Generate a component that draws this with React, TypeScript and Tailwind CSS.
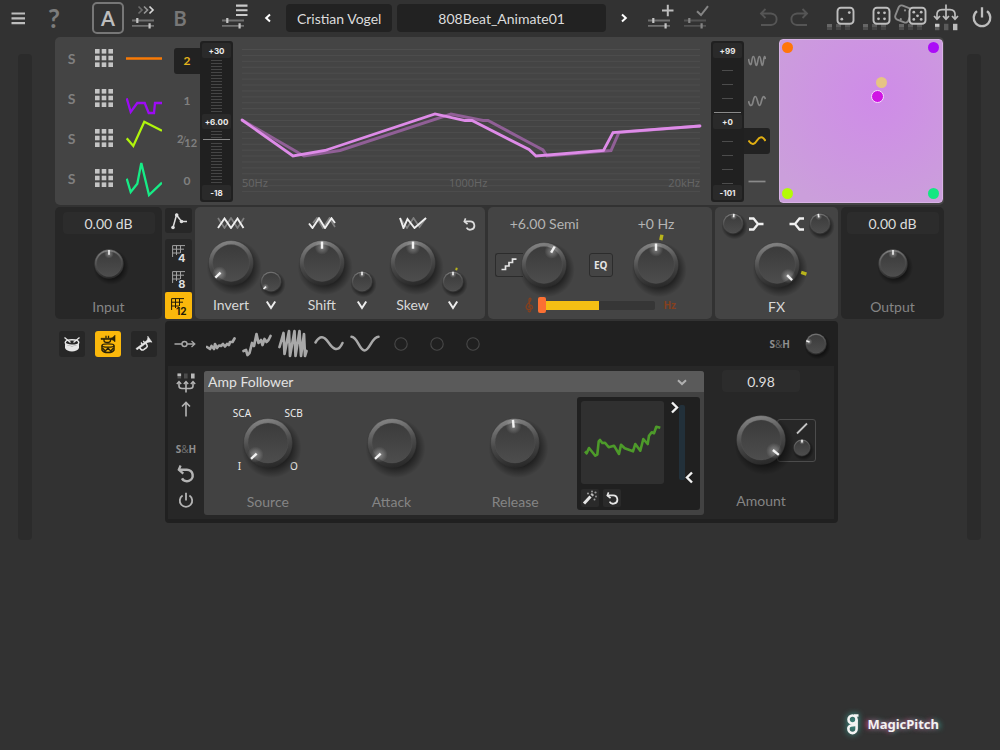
import React, { useId } from 'react';

const rad = (deg: number) => ((deg - 90) * Math.PI) / 180;

type KnobProps = { label: string; r: number; angle: number; mark?: number };

/* Rotary control: the drawn dial sits under a transparent range input. */
function Knob({ label, r, angle, mark }: KnobProps) {
  const id = useId().replace(/[^a-zA-Z0-9]/g, '');
  const c = Math.cos(rad(angle));
  const s = Math.sin(rad(angle));
  const big = r > 18;
  const inner = big ? r * 0.8 : r * 0.84;
  const mc = mark === undefined ? 0 : Math.cos(rad(mark));
  const ms = mark === undefined ? 0 : Math.sin(rad(mark));
  return (
    <span className="relative block shrink-0">
      <svg
        width={r * 2}
        height={r * 2}
        viewBox={`${-r} ${-r} ${r * 2} ${r * 2}`}
        className="block overflow-visible"
        aria-hidden="true"
      >
        <defs>
          <linearGradient id={`${id}o`} x1="0.4" y1="0" x2="0.6" y2="1">
            <stop offset="0" stopColor="#858585" />
            <stop offset="0.5" stopColor="#4a4a4a" />
            <stop offset="1" stopColor="#282828" />
          </linearGradient>
          <linearGradient id={`${id}i`} x1="0" y1="0" x2="0" y2="1">
            <stop offset="0" stopColor="#3b3b3b" />
            <stop offset="1" stopColor="#4d4d4d" />
          </linearGradient>
          <radialGradient id={`${id}s`}>
            <stop offset="0.6" stopColor="#000" stopOpacity="0.55" />
            <stop offset="1" stopColor="#000" stopOpacity="0" />
          </radialGradient>
          <radialGradient id={`${id}g`}>
            <stop offset="0" stopColor="#fff" stopOpacity="0.35" />
            <stop offset="1" stopColor="#fff" stopOpacity="0" />
          </radialGradient>
        </defs>
        <circle cx={r * 0.14} cy={r * 0.2} r={r * 1.2} fill={`url(#${id}s)`} />
        <circle r={r - 0.5} fill={`url(#${id}o)`} stroke="#2e2e2e" strokeOpacity="0.6" strokeWidth="0.6" />
        <circle r={inner} fill={`url(#${id}i)`} stroke="#5a5a5a" strokeOpacity="0.4" strokeWidth="0.7" />
        <circle cx={c * r * 0.68} cy={s * r * 0.68} r={r * 0.32} fill={`url(#${id}g)`} />
        <line
          x1={c * r * 0.62}
          y1={s * r * 0.62}
          x2={c * r * 0.93}
          y2={s * r * 0.93}
          stroke="#f2f2f2"
          strokeWidth={big ? 2.4 : 1.6}
        />
        {mark !== undefined && (
          <line
            x1={mc * r * 1.1}
            y1={ms * r * 1.1}
            x2={mc * r * 1.34}
            y2={ms * r * 1.34}
            stroke="#b8b41c"
            strokeWidth={big ? 3.4 : 2}
          />
        )}
      </svg>
      <input
        type="range"
        aria-label={label}
        min={-150}
        max={150}
        defaultValue={angle}
        className="absolute inset-0 m-0 h-full w-full cursor-pointer opacity-0"
      />
    </span>
  );
}

type IconProps = { w: number; h: number; children: React.ReactNode; className?: string };

function Icon({ w, h, children, className = '' }: IconProps) {
  return (
    <svg
      width={w}
      height={h}
      viewBox={`0 0 ${w} ${h}`}
      fill="none"
      stroke="currentColor"
      strokeWidth="2"
      className={`block shrink-0 ${className}`}
      aria-hidden="true"
    >
      {children}
    </svg>
  );
}

function Slot({ label, className = 'w-9', children }: { label: string; className?: string; children: React.ReactNode }) {
  return (
    <button type="button" aria-label={label} className={`flex shrink-0 items-center justify-center ${className}`}>
      {children}
    </button>
  );
}

const Sliders = ({ dim }: { dim?: boolean }) => (
  <>
    <path d="M6 17.5H28M6 22.8H28" stroke={dim ? '#525252' : '#707070'} strokeWidth="1.8" />
    <path d="M11.3 15V20M23.6 20.3V25.6" stroke={dim ? '#858585' : '#c4c4c4'} strokeWidth="2.2" />
  </>
);

const DieBars = () => (
  <g stroke="none">
    <rect x="7" y="21" width="5" height="6" fill="#4e4e4e" />
    <rect x="7" y="21" width="5" height="3" fill="#666" />
    <rect x="16" y="21" width="5" height="6" fill="#444" />
    <rect x="16" y="21" width="5" height="3" fill="#585858" />
    <rect x="25" y="21" width="5" height="6" fill="#444" />
    <rect x="25" y="21" width="5" height="3" fill="#555" />
  </g>
);

function Die({ dots }: { dots: [number, number][] }) {
  return (
    <>
      <rect x="17.5" y="4.8" width="16" height="16" rx="3.4" fill="#323232" strokeWidth="1.9" />
      {dots.map(([x, y]) => (
        <circle key={`${x}-${y}`} cx={x} cy={y} r="1.4" fill="currentColor" stroke="none" />
      ))}
    </>
  );
}

function Header() {
  return (
    <header className="flex h-9 items-stretch text-[#bdbdbd]">
      <Slot label="Menu">
        <Icon w={36} h={30}>
          <path d="M11.5 10.5H25M11.5 15.3H25M11.5 20.2H25" strokeWidth="2.2" />
        </Icon>
      </Slot>
      <Slot label="Help">
        <span className="text-[26px] leading-8 font-bold text-[#7c7c7c]">?</span>
      </Slot>
      <Slot label="Settings A" className="ml-[18px] w-9">
        <span className="flex h-8 w-8 items-center justify-center rounded-[5px] border-2 border-[#777] text-[20px] leading-none font-bold">
          A
        </span>
      </Slot>
      <Slot label="Copy A to B">
        <Icon w={36} h={30}>
          <path d="M12.5 3.5L16 7L12.5 10.5" stroke="#6b6b6b" strokeWidth="1.7" />
          <path d="M18 3.5L21.5 7L18 10.5" stroke="#959595" strokeWidth="1.7" />
          <path d="M23.5 3.5L27 7L23.5 10.5" stroke="#d6d6d6" strokeWidth="1.7" />
          <Sliders />
        </Icon>
      </Slot>
      <Slot label="Settings B">
        <span className="text-[20px] leading-none font-bold text-[#777]">B</span>
      </Slot>
      <Slot label="Preset list" className="ml-[18px] w-9">
        <Icon w={36} h={30}>
          <path d="M20 2.6H31.5M20 7.2H31.5M20 12H31.5" stroke="#cacaca" strokeWidth="2.1" />
          <Sliders />
        </Icon>
      </Slot>
      <Slot label="Previous preset" className="w-8 text-white">
        <Icon w={8} h={10}>
          <path d="M6 1.5L2.2 5L6 8.5" />
        </Icon>
      </Slot>
      <div className="flex min-w-0 flex-1 items-center gap-[5px] pl-0.5 text-[14px] text-[#dcdcdc]">
        <button type="button" className="h-7 min-w-0 flex-[106] rounded-[4px] bg-[#222] whitespace-nowrap">
          Cristian Vogel
        </button>
        <button type="button" className="h-7 min-w-0 flex-[208] rounded-[4px] bg-[#222] whitespace-nowrap">
          808Beat_Animate01
        </button>
      </div>
      <Slot label="Next preset" className="w-9 text-white">
        <Icon w={8} h={10}>
          <path d="M2 1.5L5.8 5L2 8.5" />
        </Icon>
      </Slot>
      <Slot label="Save as new preset">
        <Icon w={36} h={30}>
          <path d="M20 7.5H31.5M25.8 1.8V13.2" />
          <Sliders />
        </Icon>
      </Slot>
      <Slot label="Save preset">
        <Icon w={36} h={30}>
          <path d="M19 8.2L23 12L30 3.2" stroke="#858585" />
          <Sliders dim />
        </Icon>
      </Slot>
      <Slot label="Undo" className="ml-[38px] w-8 text-[#555]">
        <Icon w={24} h={24}>
          <path d="M9.5 3L5 7.5L9.5 12M5 7.5H15C22.5 8 22.5 18.5 15 19H5" strokeWidth="1.9" />
        </Icon>
      </Slot>
      <Slot label="Redo" className="mr-1 w-8 text-[#555]">
        <Icon w={24} h={24}>
          <path d="M14.5 3L19 7.5L14.5 12M19 7.5H9C1.5 8 1.5 18.5 9 19H19" strokeWidth="1.9" />
        </Icon>
      </Slot>
      <Slot label="Randomise a little">
        <Icon w={36} h={30}>
          <DieBars />
          <Die dots={[[29.3, 9.6], [21.8, 16.2]]} />
        </Icon>
      </Slot>
      <Slot label="Randomise more">
        <Icon w={36} h={30}>
          <DieBars />
          <Die dots={[[22.5, 9.8], [28.5, 9.8], [22.5, 15.8], [28.5, 15.8]]} />
        </Icon>
      </Slot>
      <Slot label="Randomise everything">
        <Icon w={36} h={30}>
          <DieBars />
          <g stroke="#8c8c8c">
            <rect x="4.5" y="3.5" width="14" height="15" rx="3.2" transform="rotate(22 11.5 11)" strokeWidth="1.9" />
            <circle cx="13" cy="7.4" r="1.1" fill="#8c8c8c" stroke="none" />
            <circle cx="8.8" cy="16.2" r="1.1" fill="#8c8c8c" stroke="none" />
          </g>
          <Die dots={[[21.8, 9.2], [29.2, 9.2], [25.5, 12.8], [21.8, 16.4], [29.2, 16.4]]} />
        </Icon>
      </Slot>
      <Slot label="Routing">
        <Icon w={36} h={30}>
          <path d="M18 1.5V15.5M9 15.5V11Q9 7 14 6.6H22Q27 7 27 11V15.5" strokeWidth="1.7" />
          <path d="M6 13L9 16.2L12 13M15 13L18 16.2L21 13M24 13L27 16.2L30 13" strokeWidth="1.7" />
          <g stroke="none">
            <rect x="7" y="20.8" width="4.4" height="6.4" fill="#5e5e5e" />
            <rect x="7" y="20.8" width="4.4" height="3" fill="#c8c8c8" />
            <rect x="16" y="20.8" width="4.4" height="6.4" fill="#5a5a5a" />
            <rect x="25" y="20.8" width="4.4" height="6.4" fill="#bcbcbc" />
          </g>
        </Icon>
      </Slot>
      <Slot label="Power">
        <Icon w={36} h={30}>
          <path d="M13 8.2A8.3 8.3 0 1 0 23 8.2M18 4.2V14.5" strokeWidth="2.3" />
        </Icon>
      </Slot>
    </header>
  );
}

const BANDS = [
  { name: 'Band 1', points: '0,20.5 36,20.5', color: '#f97a06', value: '2', on: true },
  { name: 'Band 2', points: '0.7,20.3 4.7,34 11.3,25 18.7,25 22.7,35 28,35 29,25 36,25', color: '#9d0af5', value: '1' },
  { name: 'Band 3', points: '0.7,20.3 7.3,28 18.3,3.7 36,12.7', color: '#b0f50c', value: '2/12' },
  { name: 'Band 4', points: '0.7,20.7 4.7,34 11.3,25.7 15.3,5 23,37 36,24.7', color: '#16ec86', value: '0' },
];

function BandList() {
  return (
    <div className="flex w-[145px] shrink-0 flex-col pt-px">
      {BANDS.map((b) => (
        <div key={b.name} className="flex h-10 items-center">
          <button type="button" aria-label={`Solo ${b.name}`} className="w-[33px] text-[14px] font-bold text-[#808080]">
            S
          </button>
          <Slot label={`${b.name} grid`} className="w-8">
            <Icon w={18} h={18}>
              {[0, 6.7, 13.4].map((y) =>
                [0, 6.7, 13.4].map((x) => (
                  <rect key={`${x}-${y}`} x={x} y={y} width="4.6" height="4.6" fill="#c4c4c4" stroke="none" />
                )),
              )}
            </Icon>
          </Slot>
          <Slot label={`${b.name} curve`} className="ml-1.5 w-9">
            <Icon w={36} h={40}>
              <polyline points={b.points} stroke={b.color} strokeWidth="2.3" />
            </Icon>
          </Slot>
          <button
            type="button"
            aria-label={`${b.name} octave ${b.value}`}
            className={
              b.on
                ? 'mt-[6px] ml-3 h-[26px] w-[26px] rounded-l-[3px] bg-[#222] text-[12px] font-bold text-[#e3b31c]'
                : 'mt-[6px] ml-3 h-[26px] w-[26px] text-[12px] font-bold text-[#808080]'
            }
          >
            {b.value === '2/12' ? (
              <span className="flex items-center justify-center text-[11px]">
                <span className="pb-1">2</span>
                <span className="-mx-0.5 font-normal">/</span>
                <span className="pt-1">12</span>
              </span>
            ) : (
              b.value
            )}
          </button>
        </div>
      ))}
    </div>
  );
}

function Readout({ children }: { children: React.ReactNode }) {
  return (
    <span className="flex h-[15px] w-[29px] shrink-0 items-center justify-center rounded-[2px] bg-[#2a2a2a] font-['Inter',sans-serif] text-[8px] leading-none font-bold text-[#ececec]">
      {children}
    </span>
  );
}

function Fader({ label, top, mid, low, fine }: { label: string; top: string; mid: string; low: string; fine?: boolean }) {
  const ticks = fine
    ? 'w-[11px] flex-1 bg-[repeating-linear-gradient(to_bottom,transparent_0_2px,#454545_2px_3px)]'
    : 'w-[11px] flex-1 bg-[repeating-linear-gradient(to_bottom,transparent_0_12px,#4c4c4c_12px_13px,transparent_13px_14px)]';
  return (
    <label className="relative my-1 flex h-[161px] w-[33px] shrink-0 flex-col items-center rounded-[3px] bg-[#202020] py-0.5">
      <Readout>{top}</Readout>
      {fine ? (
        <span className={ticks} />
      ) : (
        <span className="flex w-full flex-1 flex-col items-center">
          <span className={ticks} />
          <span className="mb-px h-px w-[27px] bg-[#8a8a8a]" />
        </span>
      )}
      <Readout>{mid}</Readout>
      {fine ? (
        <span className="flex w-full flex-1 flex-col items-center">
          <span className="h-[9px] w-[11px] bg-[repeating-linear-gradient(to_bottom,transparent_0_2px,#454545_2px_3px)]" />
          <span className="my-px h-px w-[27px] bg-[#8a8a8a]" />
          <span className={ticks} />
        </span>
      ) : (
        <span className={ticks} />
      )}
      <Readout>{low}</Readout>
      <input type="range" aria-label={label} className="absolute inset-0 m-0 h-full w-full opacity-0" />
    </label>
  );
}

function Graph() {
  return (
    <div className="relative mt-3 mr-[11px] ml-[9px] h-[145px] min-w-0 flex-1 self-start">
      <svg viewBox="0 0 458 145" preserveAspectRatio="none" className="block h-full w-full overflow-visible" fill="none" aria-hidden="true">
        {Array.from({ length: 25 }, (_, i) => (
          <line key={i} x1="0" x2="458" y1={0.5 + i * 5.92} y2={0.5 + i * 5.92} stroke="#4e4e4e" vectorEffect="non-scaling-stroke" />
        ))}
        <polyline
          points="0,71 62,107 98,101.5 209,65 241,71.5 246,71.5 288,94 301,101 305,107 369,101.5 377,83.5 458,77"
          stroke="#905f96"
          strokeWidth="3"
          vectorEffect="non-scaling-stroke"
        />
        <polyline
          points="0,71 51,107 83,101.5 193,65 223,71.5 230,71.5 287,100.5 294,107 361.5,101.5 371,83.5 458,77"
          stroke="#de8be8"
          strokeWidth="2.8"
          strokeLinecap="round"
          vectorEffect="non-scaling-stroke"
        />
      </svg>
      <div className="absolute inset-x-0 bottom-[3px] flex justify-between font-['Open_Sans',sans-serif] text-[11px] leading-4 text-[#666]">
        <span>50Hz</span>
        <span>1000Hz</span>
        <span>20kHz</span>
      </div>
    </div>
  );
}

function WaveColumn() {
  return (
    <div className="flex w-[26px] shrink-0 flex-col pt-px">
      <div className="flex h-10 items-center text-[#858585]">
        <Slot label="Fast wave" className="mt-[6px] h-[26px] w-[26px]">
          <Icon w={18} h={12}>
            <path d="M0.5 4C1.5 10 3 12 3.8 6S6 0 7 6S8.8 12 9.8 6S12 0 13 6S14.8 12 15.5 6S17 1 17.5 4" strokeWidth="1.6" />
          </Icon>
        </Slot>
      </div>
      <div className="flex h-10 items-center text-[#858585]">
        <Slot label="Medium wave" className="mt-[6px] h-[26px] w-[26px]">
          <Icon w={18} h={12}>
            <path d="M0.5 6C2 12 4 12 5.2 6S8 0 9.5 6S12 12 13.5 6S16 1 17.5 4" strokeWidth="1.7" />
          </Icon>
        </Slot>
      </div>
      <div className="flex h-10 items-center text-[#e0ae12]">
        <Slot label="Slow wave" className="mt-[6px] h-[26px] w-[26px] rounded-r-[3px] bg-[#222]">
          <Icon w={18} h={12}>
            <path d="M0.5 5.5C4 11 6.500 9.500 9 5.500S14.500 0.500 17.500 6" />
          </Icon>
        </Slot>
      </div>
      <div className="flex h-10 items-center text-[#8a8a8a]">
        <Slot label="Flat" className="mt-[6px] h-[26px] w-[26px]">
          <Icon w={18} h={12}>
            <path d="M0.5 6.500H17.500" strokeWidth="1.7" />
          </Icon>
        </Slot>
      </div>
    </div>
  );
}

function MorphPad() {
  const dot = 'absolute h-[11px] w-[11px] rounded-full';
  return (
    <div className="relative mt-0.5 mr-px ml-[9px] h-[164px] w-[164px] shrink-0 rounded-[4px] border border-[#d9b3e6] bg-[radial-gradient(circle_at_60%_35%,#cf8be8,#cb9fdb_85%)]">
      <span className={`${dot} top-[2px] left-[2px] bg-[#ff760a]`} />
      <span className={`${dot} top-[2px] right-[3px] bg-[#ab0cf7]`} />
      <span className={`${dot} bottom-[3px] left-[2px] bg-[#b4fb08]`} />
      <span className={`${dot} right-[3px] bottom-[3px] bg-[#13e782]`} />
      <span className={`${dot} top-[37px] left-[96px] bg-[#e6c484]`} />
      <span className="absolute top-[50px] left-[91px] h-[13px] w-[13px] rounded-full border border-[#f6e0fb] bg-[#d014e4]" />
    </div>
  );
}

function GainPanel({ label, className }: { label: string; className: string }) {
  return (
    <section className={`flex shrink-0 flex-col items-center rounded-[5px] bg-[#272727] pt-[5px] ${className}`}>
      <input
        type="text"
        aria-label={`${label} level`}
        defaultValue="0.00 dB"
        className="h-[22px] w-[92px] rounded-[4px] bg-[#2c2c2c] text-center text-[14px] text-[#dcdcdc]"
      />
      <div className="mt-[15px]">
        <Knob label={label} r={15} angle={0} />
      </div>
      <span className="mt-[18px] text-[14px] leading-5 text-[#858585]">{label}</span>
    </section>
  );
}

function GridGlyph({ n, dark }: { n: string; dark?: boolean }) {
  return (
    <span className={dark ? 'relative block h-4 w-4 text-[#1f1a08]' : 'relative block h-4 w-3.5 text-[#a2a2a2]'}>
      <Icon w={13} h={12}>
        <path d="M0.6 12V0.6H13M4.5 0.6V10M8.5 0.6V8M0.6 4.2H12M0.6 8H8" strokeWidth="1" />
      </Icon>
      <span
        className={
          dark
            ? "absolute right-0 -bottom-0.5 bg-[#fbb80b] font-['Inter',sans-serif] text-[10px] leading-[9px] font-bold"
            : "absolute right-0 -bottom-0.5 bg-[#272727] font-['Inter',sans-serif] text-[11px] leading-[9px] font-bold text-[#dedede]"
        }
      >
        {n}
      </span>
    </span>
  );
}

function StepColumn() {
  return (
    <div className="flex w-[27px] shrink-0 flex-col">
      <Slot label="Free curve" className="mt-px h-[25px] w-[27px] rounded-[3px] bg-[#272727] text-[#dedede]">
        <Icon w={18} h={18}>
          <path d="M3 15.5L6.5 3L11.5 9.5H17" strokeWidth="1.5" />
          <g fill="currentColor" stroke="none">
            <circle cx="3" cy="15.500" r="1.8" />
            <circle cx="6.7" cy="3" r="1.8" />
            <circle cx="11.5" cy="9.5" r="1.8" />
          </g>
        </Icon>
      </Slot>
      <Slot label="4 steps" className="mt-1.5 h-[27px] w-[27px] rounded-t-[3px] bg-[#272727]">
        <GridGlyph n="4" />
      </Slot>
      <Slot label="8 steps" className="h-[26px] w-[27px] bg-[#272727]">
        <GridGlyph n="8" />
      </Slot>
      <Slot label="12 steps" className="h-[27px] w-[27px] rounded-[2px] bg-[#fbb80b]">
        <GridGlyph n="12" dark />
      </Slot>
    </div>
  );
}

type ShapeProps = { label: string; angle: number; small: number; mark?: number; children: React.ReactNode };

function ShapeControl({ label, angle, small, mark, children }: ShapeProps) {
  return (
    <div className="grid grid-cols-[56px_24px] justify-items-center">
      <span className="flex h-[18px] items-end">
        <Icon w={28} h={12}>
          {children}
        </Icon>
      </span>
      <span />
      <div className="mt-[7px]">
        <Knob label={label} r={23} angle={angle} />
      </div>
      <div className="mt-[38px]">
        <Knob label={`${label} modulation`} r={11} angle={small} mark={mark} />
      </div>
      <span className="-mt-[3px] text-[14px] leading-5 text-[#d8d8d8]">{label}</span>
      <Slot label={`${label} options`} className="-mt-[3px] h-5 w-6 text-[#ededed]">
        <Icon w={12} h={10}>
          <path d="M1.8 1.5L6 8L10.2 1.5" />
        </Icon>
      </Slot>
    </div>
  );
}

const RestoreArrow = ({ size }: { size: number }) => (
  <svg width={size} height={size} viewBox="0 0 16 16" fill="none" stroke="currentColor" strokeWidth="2.2" aria-hidden="true">
    <path d="M1.5 4.2H8.800A5.100 5.100 0 1 1 4.400 11.800" />
    <path d="M3.200 0.500L1.600 4.200L5.600 7.600" strokeWidth="2" />
  </svg>
);

function ShapePanel() {
  return (
    <section className="flex min-w-0 flex-[274] justify-between rounded-[5px] bg-[#444] pt-1 pr-[9px] pl-2">
      <ShapeControl label="Invert" angle={-133} small={-133}>
        <path d="M1 1L7.5 11L14 1L20.5 11L27 1" stroke="#808080" strokeWidth="1.7" />
        <path d="M1 11L7.5 1.5L14 11L20.5 1.5L26.500 11" stroke="#efefef" strokeWidth="1.9" />
      </ShapeControl>
      <ShapeControl label="Shift" angle={0} small={0}>
        <path d="M5 6L9 1L15 11L21.5 1L27 10" stroke="#808080" strokeWidth="1.7" />
        <path d="M1 6.5L4.5 11L11 1.2L17 11L23.5 1.2L27 6" stroke="#efefef" strokeWidth="1.9" />
      </ShapeControl>
      <ShapeControl label="Skew" angle={0} small={0} mark={15}>
        <path d="M1 1L8 11L14.5 1L20.5 10L27 1" stroke="#808080" strokeWidth="1.7" />
        <path d="M1 1L4.5 11L8.5 2L15.5 11L27 1" stroke="#efefef" strokeWidth="1.9" />
      </ShapeControl>
      <Slot label="Reset shape" className="mt-[5px] -ml-[13px] h-4 w-3.5 text-[#dcdcdc]">
        <RestoreArrow size={13} />
      </Slot>
    </section>
  );
}

function PitchPanel() {
  return (
    <section className="flex min-w-0 flex-[224] flex-col rounded-[5px] bg-[#444] pt-[7px]">
      <div className="flex justify-center text-[14px] leading-5 text-[#b4b4b4]">
        <span className="w-[113px] text-center">+6.00 Semi</span>
        <span className="w-[113px] text-center">+0 Hz</span>
      </div>
      <div className="mt-[19px] flex h-[23px] items-center justify-center pr-[27px]">
        <Slot label="Quantise" className="h-6 w-7 rounded-l-[3px] border border-r-0 border-[#2c2c2c] text-[#e4e4e4]">
          <Icon w={16} h={13}>
            <path d="M0.5 11.5H4.5V8H8V4.5H11.5V1.2H15.5" strokeWidth="1.7" />
          </Icon>
        </Slot>
        <div className="-ml-0.5">
          <Knob label="Semitones" r={23} angle={30} />
        </div>
        <button
          type="button"
          className="ml-[22px] h-6 w-6 rounded-[3px] border border-[#2c2c2c] font-['Noto_Sans',sans-serif] text-[10px] leading-none font-bold text-[#e4e4e4]"
        >
          EQ
        </button>
        <div className="ml-5">
          <Knob label="Hertz" r={23} angle={0} mark={11} />
        </div>
      </div>
      <div className="mt-[21px] flex items-center justify-center text-[#85401f]">
        <Icon w={14} h={16}>
          <path
            d="M4 13.5C4.800 15.600 7 15 6.600 12.800L5 4C4.700 1.600 6 0.500 6.800 1.500C7.600 4 5 5.600 3.300 7.400C1.200 9.600 2 12.400 5 12.600C8.200 12.700 9.400 10.600 8 8.900C6.600 7.500 4.200 8.600 4.800 10.600"
            strokeWidth="1.300"
          />
        </Icon>
        <label className="relative flex h-4 w-[117px] items-center">
          <span className="flex h-[9px] w-full overflow-hidden rounded-[2px] bg-[#363636]">
            <span className="w-[52%] bg-[#f5bf14]" />
          </span>
          <span className="absolute top-0 left-0 h-4 w-2 rounded-[2px] bg-[#fb7033]" />
          <input type="range" aria-label="Pitch to frequency blend" defaultValue={3} className="absolute inset-0 m-0 h-full w-full opacity-0" />
        </label>
        <span className="ml-2 font-['Noto_Sans',sans-serif] text-[10px] leading-4 font-bold">Hz</span>
      </div>
    </section>
  );
}

function FxPanel() {
  return (
    <section className="flex w-[123px] shrink-0 flex-col items-center rounded-[5px] bg-[#444] pt-1.5">
      <div className="flex w-full items-center justify-between px-[7px] text-[#f0f0f0]">
        <div className="flex items-center gap-[5px]">
          <Knob label="Low cut" r={11} angle={5} />
          <Icon w={15} h={14}>
            <path d="M0 1.500H4.500L9 7L4.500 12.500H0M9 7H14.500" strokeWidth="2.300" />
          </Icon>
        </div>
        <div className="flex items-center gap-[5px]">
          <Icon w={15} h={14}>
            <path d="M15 1.500H10.500L6 7L10.500 12.500H15M6 7H0.500" strokeWidth="2.300" />
          </Icon>
          <Knob label="High cut" r={11} angle={-10} />
        </div>
      </div>
      <div className="mt-[7px]">
        <Knob label="FX" r={23} angle={135} mark={107} />
      </div>
      <span className="mt-[9px] text-[14px] leading-5 text-[#d8d8d8]">FX</span>
    </section>
  );
}

function SourceButtons() {
  const box = 'h-[26px] w-[26px] rounded-[3px]';
  return (
    <div className="flex w-[107px] shrink-0 items-start gap-[10px] pt-[10px] pl-1">
      <Slot label="Drums" className={`${box} bg-[#272727] text-[#e6e6e6]`}>
        <Icon w={18} h={17}>
          <ellipse cx="9" cy="6.500" rx="6.800" ry="2.800" strokeWidth="1.400" />
          <path d="M2 7.500V12C3.500 16.500 14.500 16.500 16 12V7.500C13 11 5 11 2 7.500Z" fill="currentColor" stroke="none" />
          <path d="M1.500 1.500L7.500 6.500M16.500 1.500L10.500 6.500" strokeWidth="1.300" />
        </Icon>
      </Slot>
      <Slot label="Drums and brass" className={`${box} bg-[#fbb80b] text-[#2a2208]`}>
        <Icon w={18} h={20}>
          <path d="M2 4.300H10.500C13 4.300 14.500 3 16 1.200V7.800C14.500 6.200 13 5.400 10.500 5.400H2Z" fill="currentColor" strokeWidth="0.600" />
          <path d="M5 5V6.500Q5 8.300 7 8.300H9.500Q11.500 8.300 11.500 6.500V5M7 1.800V4M9.500 1.800V4" strokeWidth="1.300" />
          <ellipse cx="9" cy="11.500" rx="6" ry="1.700" strokeWidth="1.300" />
          <path d="M3 11.500V16C5 19.300 13 19.300 15 16V11.500" strokeWidth="1.500" />
          <path d="M3.500 14L6.300 17L9 14L11.700 17L14.500 14" strokeWidth="1.300" />
        </Icon>
      </Slot>
      <Slot label="Brass" className={`${box} bg-[#272727] text-[#e6e6e6]`}>
        <Icon w={18} h={18}>
          <path d="M1 13.500L11 6.300C12.500 5 13 3.500 12.800 1.200L17 7.200C15 6.600 13.500 7 12 7.800L2 14.800Z" fill="currentColor" strokeWidth="0.600" />
          <path d="M4.500 12.500L6 14.400Q7.200 15.600 8.700 14.600L11.500 12.600Q12.800 11.500 12 10.200L10.700 8.200" strokeWidth="1.500" />
          <path d="M6 7.500L7.300 9.300M8.300 5.800L9.600 7.600" strokeWidth="1.300" />
        </Icon>
      </Slot>
    </div>
  );
}

function SampleHold() {
  return (
    <span className="font-['Noto_Sans',sans-serif] text-[10px] leading-4 font-bold text-[#8f8f8f]">
      S<span className="font-normal text-[#6c6c6c]">&amp;</span>H
    </span>
  );
}

function ModTabs() {
  return (
    <div className="flex h-[45px] items-center pl-0.5 text-[#a8a8a8]">
      <Slot label="Direct" className="h-9 w-9">
        <Icon w={22} h={10}>
          <path d="M0.5 5H8M13 5H20.5M17.5 2L20.8 5L17.5 8" strokeWidth="1.3" />
          <circle cx="10.5" cy="5" r="2.5" strokeWidth="1.4" />
        </Icon>
      </Slot>
      <Slot label="Modulator 1" className="h-9 w-9">
        <Icon w={30} h={14}>
          <path d="M1 10L4 12L5.5 9L8 12L9 7L11 11L13 8.5L15 9L17 7L19 9.5L21 7L23 8L24 5L26.5 5L28.5 1.5" strokeWidth="2.700" strokeLinejoin="round" strokeLinecap="round" />
        </Icon>
      </Slot>
      <Slot label="Modulator 2" className="h-9 w-9">
        <Icon w={30} h={26}>
          <path d="M1.5 20L4 19L5.5 24L7.5 22L10 12L12 15L14.5 3L16.5 12L19 9L20.5 14L22.5 8L24.5 11L26.5 9L28.5 5" strokeWidth="2.700" strokeLinejoin="round" strokeLinecap="round" />
        </Icon>
      </Slot>
      <Slot label="Modulator 3" className="h-9 w-9">
        <Icon w={30} h={30}>
          <path d="M1.5 18L5.5 4L6.5 25L11 2L12 27L16.5 2L17.5 27L21.5 2L23 27L26 5L27 27L28.5 22" strokeWidth="2.700" strokeLinejoin="round" strokeLinecap="round" />
        </Icon>
      </Slot>
      <Slot label="Modulator 4" className="h-9 w-9">
        <Icon w={30} h={18}>
          <path d="M1.5 7.5C6 0 10 1 14.500 7.500S24 18 28.500 8" strokeWidth="2.500" strokeLinecap="round" />
        </Icon>
      </Slot>
      <Slot label="Modulator 5" className="h-9 w-9">
        <Icon w={30} h={18}>
          <path d="M1.500 1.800C7.500 2 9.500 15.500 14.500 15.500S22 1.800 28.500 1.800" strokeWidth="2.500" strokeLinecap="round" />
        </Icon>
      </Slot>
      {[6, 7, 8].map((n) => (
        <Slot key={n} label={`Modulator ${n}`} className="h-9 w-9 text-[#484848]">
          <Icon w={14} h={14}>
            <circle cx="7" cy="7" r="6.2" strokeWidth="1.1" />
          </Icon>
        </Slot>
      ))}
      <div className="ml-auto flex items-center gap-[15px] pr-[11px]">
        <SampleHold />
        <Knob label="Sample and hold" r={11} angle={-72} />
      </div>
    </div>
  );
}

function ModTools() {
  return (
    <div className="flex w-9 shrink-0 flex-col items-center text-[#b4b4b4]">
      <Slot label="Modulation routing" className="mt-1.5 h-[22px] w-9">
        <Icon w={20} h={22}>
          <g stroke="none">
            <rect x="1.5" y="1.5" width="3.6" height="5" fill="#555" />
            <rect x="1.5" y="1.5" width="3.6" height="2.6" fill="#bbb" />
            <rect x="8" y="1.5" width="3.6" height="5" fill="#4c4c4c" />
            <rect x="15" y="1.5" width="3.6" height="5" fill="#b8b8b8" />
          </g>
          <path d="M10 10V20.5M3 10.5V14Q3 16.5 6 16.5H14Q17 16.5 17 14V10.5" strokeWidth="1.6" />
          <path d="M0.8 12L3 9.5L5.2 12M7.8 12L10 9.5L12.2 12M14.8 12L17 9.5L19.2 12" strokeWidth="1.4" />
        </Icon>
      </Slot>
      <Slot label="Send up" className="mt-[7px] h-4 w-9">
        <Icon w={10} h={16}>
          <path d="M5 15.5V1.5M1 5.5L5 1.5L9 5.5" strokeWidth="1.6" />
        </Icon>
      </Slot>
      <button type="button" className="mt-[22px] leading-none" aria-label="S&H">
        <SampleHold />
      </button>
      <Slot label="Reset modulator" className="mt-[8px] h-[18px] w-9">
        <RestoreArrow size={18} />
      </Slot>
      <Slot label="Modulator power" className="mt-[9px] h-4 w-9">
        <Icon w={16} h={16}>
          <path d="M4.6 3.5A6.2 6.2 0 1 0 11.4 3.5M8 0.8V8.5" strokeWidth="1.8" />
        </Icon>
      </Slot>
    </div>
  );
}

function ModDisplay() {
  return (
    <div className="mt-1 mr-1 h-[113px] w-[123px] shrink-0 rounded-[3px] bg-[#202020] pt-1 pl-1">
      <div className="flex">
        <div className="rounded-[3px] bg-[#303030]">
          <Icon w={83} h={83}>
            <polyline
              points="4,50.3 5.7,52.3 8,47 14.3,54.7 16.3,53.7 17.7,40.3 19,39 21.3,42 24,41.7 27.7,46.3 33,44.7 38,53 40,43.7 43.7,47.3 52,50.3 54.3,43 59.3,49.7 62.3,38 66.7,43 68,34.7 70.7,31.3 73,32.3 75.3,25.7 79.3,26.7"
              stroke="#4d9a2a"
              strokeWidth="2.6"
              strokeLinejoin="round"
            />
          </Icon>
        </div>
        <div className="relative mt-1 ml-[15px] h-[75px] w-[6px] rounded-[2px] bg-[#22303a] text-[#f2f2f2]">
          <Icon w={8} h={13} className="absolute -top-1 -left-2">
            <path d="M1 1.5L6 6.5L1 11.5" strokeWidth="2.4" />
          </Icon>
          <Icon w={8} h={13} className="absolute -right-2 -bottom-1">
            <path d="M7 1.5L2 6.5L7 11.5" strokeWidth="2.4" />
          </Icon>
        </div>
      </div>
      <div className="mt-[5px] flex gap-1 text-[#e6e6e6]">
        <Slot label="Smooth" className="h-[18px] w-[18px] rounded-[2px] bg-[#2a2a2a]">
          <Icon w={16} h={16}>
            <path d="M2 13.5L8.5 6.5" strokeWidth="3" />
            <path d="M9.5 5.5L11 4" strokeWidth="3" stroke="#bbb" />
            <g fill="#9a9a9a" stroke="none">
              <circle cx="6" cy="3.5" r="1" />
              <circle cx="10" cy="1.5" r="1" />
              <circle cx="13.5" cy="2.5" r="1.1" />
              <circle cx="14" cy="6.5" r="0.9" />
              <circle cx="12.5" cy="9.5" r="1" />
            </g>
          </Icon>
        </Slot>
        <Slot label="Reset display" className="h-[18px] w-[18px] rounded-[2px] bg-[#2a2a2a]">
          <RestoreArrow size={13} />
        </Slot>
      </div>
    </div>
  );
}

function ModKnob({ label, angle }: { label: string; angle: number }) {
  return (
    <div className="flex flex-1 flex-col items-center pt-[25px]">
      <Knob label={label} r={25} angle={angle} />
      <span className="mt-6 text-[14px] leading-5 text-[#858585]">{label}</span>
    </div>
  );
}

function ModPanel() {
  return (
    <section className="min-w-0 flex-1 rounded-[4px] bg-[#202020] pb-1">
      <ModTabs />
      <div className="mr-1 ml-[3px] flex bg-[#272727] pb-1">
        <ModTools />
        <div className="mt-[5px] h-[144px] min-w-0 flex-1 overflow-hidden rounded-[3px] bg-[#424242]">
          <div className="relative">
            <select
              aria-label="Modulator type"
              className="block h-[21px] w-full appearance-none bg-[#5a5a5a] pl-1 text-[14px] text-[#e2e2e2]"
            >
              <option>Amp Follower</option>
            </select>
            <Icon w={10} h={7} className="pointer-events-none absolute top-2 right-[17px] text-[#b0b0b0]">
              <path d="M1 1.2L5 5L9 1.2" />
            </Icon>
          </div>
          <div className="flex pt-px">
            <div className="flex min-w-0 flex-1 pl-0.5">
              <div className="flex flex-1 flex-col items-center pt-3.5 font-['Noto_Sans',sans-serif] text-[10px] leading-3 text-[#ececec]">
                <span className="flex w-[70px] justify-between">
                  <span>SCA</span>
                  <span>SCB</span>
                </span>
                <div className="-mt-px">
                  <Knob label="Source" r={25} angle={-133} />
                </div>
                <span className="-mt-2 flex w-[64px] justify-between px-0.5">
                  <span>I</span>
                  <span>O</span>
                </span>
                <span className="mt-5 font-['Lato',sans-serif] text-[14px] leading-5 text-[#858585]">Source</span>
              </div>
              <ModKnob label="Attack" angle={-133} />
              <ModKnob label="Release" angle={-5} />
            </div>
            <ModDisplay />
          </div>
        </div>
        <div className="flex w-[130px] shrink-0 flex-col pt-1 pl-[18px]">
          <input
            type="text"
            aria-label="Amount value"
            defaultValue="0.98"
            className="h-[22px] w-[78px] rounded-[4px] bg-[#2c2c2c] text-center text-[14px] text-[#dcdcdc]"
          />
          <div className="mt-[23px] flex items-center pl-3.5">
            <div className="z-10">
              <Knob label="Amount" r={25} angle={130} />
            </div>
            <div className="-ml-[9px] flex h-[43px] w-[39px] flex-col items-center justify-between rounded-[3px] border border-[#4c4c4c] pt-0.5 pb-1 pl-2.5 text-[#c4c4c4]">
              <Icon w={12} h={13}>
                <path d="M1 11.5L11 1.5" strokeWidth="1.8" />
              </Icon>
              <Knob label="Amount modulation" r={9} angle={0} />
            </div>
          </div>
          <span className="mt-[26px] w-[78px] text-center text-[14px] leading-5 text-[#858585]">Amount</span>
        </div>
      </div>
    </section>
  );
}

function Logo() {
  return (
    <footer className="mt-auto flex items-center justify-end gap-[7px] pr-[61px] pb-3.5">
      <svg
        width="14"
        height="22"
        viewBox="0 0 14 22"
        fill="none"
        stroke="#f4f4f4"
        strokeWidth="2.6"
        className="drop-shadow-[0_0_3px_#3fb6a8]"
        aria-hidden="true"
      >
        <circle cx="6.5" cy="6.5" r="4" />
        <path d="M8 2.500H12.500M10.600 6.500V16A4.100 4.100 0 0 1 2.400 16V14.500" />
        <path d="M2.400 15Q3 11.700 10.500 12" />
      </svg>
      <span className="font-['Noto_Sans',sans-serif] text-[13px] leading-6 font-bold text-[#f2f2f2] [text-shadow:-2px_0_5px_#d0407a,2px_0_5px_#2fa08f]">
        MagicPitch
      </span>
    </footer>
  );
}

export default function App() {
  return (
    <div className="flex min-h-screen flex-col bg-[#323232] font-['Lato',sans-serif] text-[#dcdcdc]">
      <Header />
      <main className="flex gap-[23px] pt-px pr-[19px] pl-[18px]">
        <div className="mt-[17px] w-3.5 shrink-0 rounded-[4px] bg-[#2b2b2b]" />
        <div className="min-w-0 flex-1 pb-[17px]">
          <section className="flex h-[168px] rounded-[5px] bg-[#444]">
            <BandList />
            <Fader label="Pitch range" top="+30" mid="+6.00" low="-18" fine />
            <Graph />
            <Fader label="Frequency range" top="+99" mid="+0" low="-101" />
            <WaveColumn />
            <MorphPad />
          </section>
          <div className="mt-0.5 flex h-28 gap-[3px]">
            <GainPanel label="Input" className="w-[107px]" />
            <StepColumn />
            <ShapePanel />
            <PitchPanel />
            <FxPanel />
            <GainPanel label="Output" className="w-[103px]" />
          </div>
          <div className="mt-0.5 flex gap-[3px]">
            <SourceButtons />
            <ModPanel />
            <div className="w-[103px] shrink-0" />
          </div>
        </div>
        <div className="mt-[17px] w-3.5 shrink-0 rounded-[4px] bg-[#2b2b2b]" />
      </main>
      <Logo />
    </div>
  );
}
